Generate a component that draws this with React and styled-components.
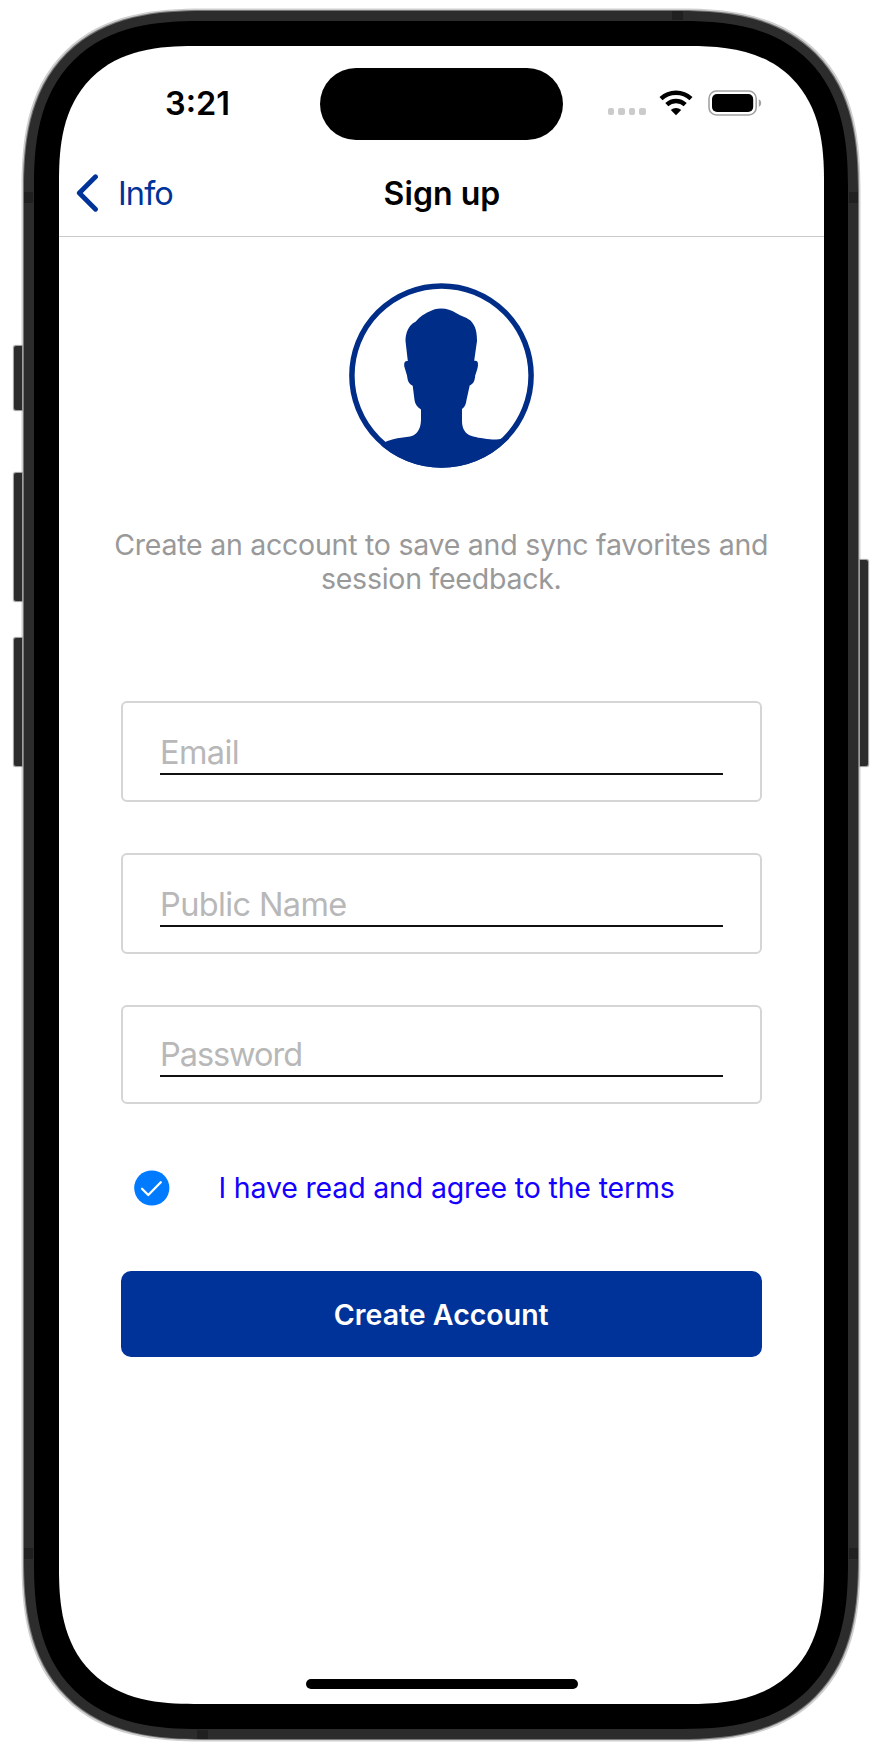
import React from "react";
import styled, { createGlobalStyle, css } from "styled-components";

const GlobalStyle = createGlobalStyle`
  * { box-sizing: border-box; }
  body { margin: 0; background: #fff; font-family: Inter, "Liberation Sans", sans-serif; }
`;

const smoothCorner = (plain, smooth) => css`
  border-radius: ${plain}px;
  @supports (corner-shape: superellipse(1.35)) {
    border-radius: ${smooth}px;
    corner-shape: superellipse(1.35);
  }
`;

const Stage = styled.main`
  width: 882px;
  height: 1746px;
  padding: 11px 24px 7px;
  overflow: hidden;
`;

const Band = styled.div`
  position: relative;
  width: 834px;
  height: 1728px;
  padding: 10px;
  background: #2c2c2c;
  box-shadow: 0 0 0 1px #777, 0 0 0 2.5px #cfcfcf;
  ${smoothCorner(142, 180)}
`;

const Bezel = styled.div`
  height: 1708px;
  padding: 25px 24px 25px 25px;
  background: #000;
  ${smoothCorner(132, 166)}
`;

const Screen = styled.div`
  display: flex;
  flex-direction: column;
  height: 1658px;
  background: #fff;
  overflow: hidden;
  ${smoothCorner(107, 135)}
`;

const SideButton = styled.span`
  position: absolute;
  top: ${(p) => p.$top}px;
  ${(p) => p.$side}: -10px;
  width: 8px;
  height: ${(p) => p.$length}px;
  background: #2c2c2c;
  border-radius: ${(p) => (p.$side === "left" ? "2px 0 0 2px" : "0 2px 2px 0")};
  box-shadow: 0 0 1px 0.5px #999;
`;

const Antenna = styled.span`
  position: absolute;
  background: #202020;
  width: ${(p) => (p.$flat ? 11 : 9)}px;
  height: ${(p) => (p.$flat ? 9 : 11)}px;
  ${(p) => p.$at}
`;

const StatusBar = styled.div`
  flex: none;
  display: grid;
  grid-template-columns: 261px 243px 261px;
  height: 104px;
  padding-top: 21.5px;
`;

const Clock = styled.time`
  align-self: start;
  padding: 16px 0 0 106px;
  font-size: 32.5px;
  line-height: 40px;
  font-weight: 600;
  letter-spacing: 0;
`;

const Island = styled.div`
  height: 72px;
  border-radius: 36px;
  background: #000;
`;

const Indicators = styled.div`
  display: flex;
  height: 26px;
  margin: 22px 0 0 45px;
`;

const Dots = styled.div`
  display: flex;
  gap: 4px;
  margin: 18.5px 13.2px 0 0;
`;

const Dot = styled.i`
  width: 6.4px;
  height: 7px;
  border-radius: 2px;
  background: #cbcbcb;
`;

const NavBar = styled.header`
  flex: none;
  display: grid;
  grid-template-columns: 1fr auto 1fr;
  align-items: center;
  height: 87px;
  padding: 0 16px 0 17px;
  border-bottom: 1px solid #cacaca;
`;

const BackLink = styled.a`
  display: flex;
  align-items: center;
  gap: 20px;
  color: #003399;
  font-size: 32.5px;
  letter-spacing: -0.9px;
`;

const Title = styled.h1`
  margin: 0;
  font-size: 32px;
  font-weight: 600;
  letter-spacing: 0.05px;
`;

const Content = styled.section`
  display: flex;
  flex-direction: column;
  flex: 1;
  padding: 45.5px 62.5px 0 62px;
`;

const Avatar = styled.svg`
  align-self: center;
  width: 185px;
  height: 185px;
`;

const Intro = styled.p`
  align-self: center;
  width: 680px;
  margin: 60px -20px 105px;
  color: #999;
  text-align: center;
  font-size: 28.5px;
  line-height: 34.4px;
  letter-spacing: -0.25px;
`;

const Form = styled.form`
  display: flex;
  flex-direction: column;
`;

const Field = styled.label`
  height: ${(p) => p.$height}px;
  margin-bottom: ${(p) => p.$after}px;
  padding: ${(p) => p.$inset}px 36.5px 0 37px;
  border: 2px solid #d5d5d5;
  border-radius: 6px;
`;

const Input = styled.input`
  display: block;
  width: 100%;
  height: 46px;
  padding: 3px 0 0;
  border: 0;
  border-bottom: 2px solid #111;
  outline: 0;
  background: none;
  font: 400 32.5px/41px Inter, "Liberation Sans", sans-serif;
  letter-spacing: ${(p) => p.$tracking}px;
  &::placeholder { color: #b8b8b8; opacity: 1; }
`;

const Consent = styled.div`
  display: flex;
  align-items: center;
  height: 40px;
  margin: 63.5px 0 63.5px 13px;
`;

const Terms = styled.a`
  margin-left: 48.5px;
  color: #1400ff;
  font-size: 28.5px;
  letter-spacing: -0.17px;
  white-space: nowrap;
`;

const Submit = styled.button`
  height: 85.5px;
  padding: 0;
  border: 0;
  border-radius: 10px;
  background: #003399;
  color: #fff;
  font: 600 28.5px Inter, "Liberation Sans", sans-serif;
`;

const HomeIndicator = styled.div`
  flex: none;
  align-self: center;
  width: 272px;
  height: 10px;
  margin-bottom: 15px;
  border-radius: 5px;
  background: #000;
`;

const fields = [
  { name: "Email", type: "email", height: 101, after: 51, inset: 26, tracking: -0.6 },
  { name: "Public Name", type: "text", height: 101, after: 51, inset: 26, tracking: -0.63 },
  { name: "Password", type: "password", height: 99, after: 0, inset: 24, tracking: -1.05 },
];

function Wifi() {
  return (
    <svg width="34" height="26" viewBox="0 0 34 26">
      <g fill="none" stroke="#000" strokeWidth="4.4">
        <path d="M2 8.7C10.4.8 23.6.8 32 8.7" />
        <path d="M7.8 14.7c5.2-4.9 13.2-4.9 18.4 0" />
      </g>
      <path d="M17 25.2l-5.2-5.1c2.9-2.7 7.5-2.7 10.4 0z" />
    </svg>
  );
}

const BatteryIcon = styled.svg`
  margin-left: 15px;
`;

function Battery() {
  return (
    <BatteryIcon width="54" height="26" viewBox="0 0 54 26">
      <rect x="1" y="1" width="47.2" height="24" rx="7.5" fill="none" stroke="#a2a2a2" strokeWidth="1.6" />
      <rect x="4" y="4" width="41.2" height="18" rx="5" />
      <path d="M50.8 9.2c3.2 1.3 3.2 6.3 0 7.6z" fill="#a2a2a2" />
    </BatteryIcon>
  );
}

export default function App() {
  return (
    <Stage>
      <GlobalStyle />
      <Band>
        <SideButton $side="left" $top={335} $length={64} />
        <SideButton $side="left" $top={462} $length={128} />
        <SideButton $side="left" $top={627} $length={128} />
        <SideButton $side="right" $top={549} $length={206} />
        <Antenna $at="left: 0; top: 181px;" />
        <Antenna $at="right: 0; top: 181px;" />
        <Antenna $at="left: 0; top: 1537px;" />
        <Antenna $at="right: 0; top: 1537px;" />
        <Antenna $flat $at="left: 648px; top: 0;" />
        <Antenna $flat $at="left: 173px; bottom: 0;" />
        <Bezel>
          <Screen>
            <StatusBar>
              <Clock>3:21</Clock>
              <Island />
              <Indicators>
                <Dots><Dot /><Dot /><Dot /><Dot /></Dots>
                <Wifi />
                <Battery />
              </Indicators>
            </StatusBar>
            <NavBar>
              <BackLink>
                <svg width="22" height="38" viewBox="0 0 22 38">
                  <path d="M19.5 2.8L3.3 19l16.2 16.2" fill="none" stroke="#003399" strokeWidth="4.8" strokeLinecap="round" strokeLinejoin="round" />
                </svg>
                Info
              </BackLink>
              <Title>Sign up</Title>
            </NavBar>
            <Content>
              <Avatar viewBox="0 0 185 185">
                <defs>
                  <clipPath id="disc"><circle cx="92.5" cy="92.5" r="92.3" /></clipPath>
                </defs>
                <circle cx="92.5" cy="92.5" r="89.6" fill="none" stroke="#002d87" strokeWidth="5.5" />
                <path
                  clipPath="url(#disc)"
                  fill="#002d87"
                  d="M92 25.500c-5 0-8 1.300-11 2.700C73 31.500 69 36 66.500 38.700C59 42 56.500 51 56.500 58L58.800 78c-3-.5-4 1.500-3.500 5.500L58 92.500c.8 6 2 8.500 5.700 10.200L65.500 117c.5 4 2.500 7 6.500 9.500V137c-.3 6-1.500 10-5 13.500c-3.500 3.200-8 3.400-13 3.900C46 155 40 157 34 160L10 185H175V155H155c-5 1.300-9 2-14 1.300c-8-1-16-2-21-4.300c-5-3-7-8-7-14V126c3-2 4-5 4.500-9l3.200-14.500c4-2 5-4.500 5.500-10c2-6 3-9 2.700-11c.3-3-1-4.200-3.700-3.700L128 58c0-8-1-15-6.500-20.500C116 33.500 112 33 107 30C102 27 98 25.500 92 25.500z"
                />
              </Avatar>
              <Intro>Create an account to save and sync favorites and<br />session feedback.</Intro>
              <Form>
                {fields.map((f) => (
                  <Field key={f.name} $height={f.height} $after={f.after} $inset={f.inset}>
                    <Input type={f.type} placeholder={f.name} $tracking={f.tracking} />
                  </Field>
                ))}
                <Consent>
                  <svg width="36" height="36" viewBox="0 0 36 36">
                    <circle cx="17.8" cy="18" r="17.6" fill="#007aff" />
                    <path d="M8 18.800l6.300 6.200L26.800 12.300" fill="none" stroke="#fff" strokeWidth="2.300" strokeLinecap="round" strokeLinejoin="round" />
                  </svg>
                  <Terms>I have read and agree to the terms</Terms>
                </Consent>
                <Submit type="button">Create Account</Submit>
              </Form>
            </Content>
            <HomeIndicator />
          </Screen>
        </Bezel>
      </Band>
    </Stage>
  );
}
